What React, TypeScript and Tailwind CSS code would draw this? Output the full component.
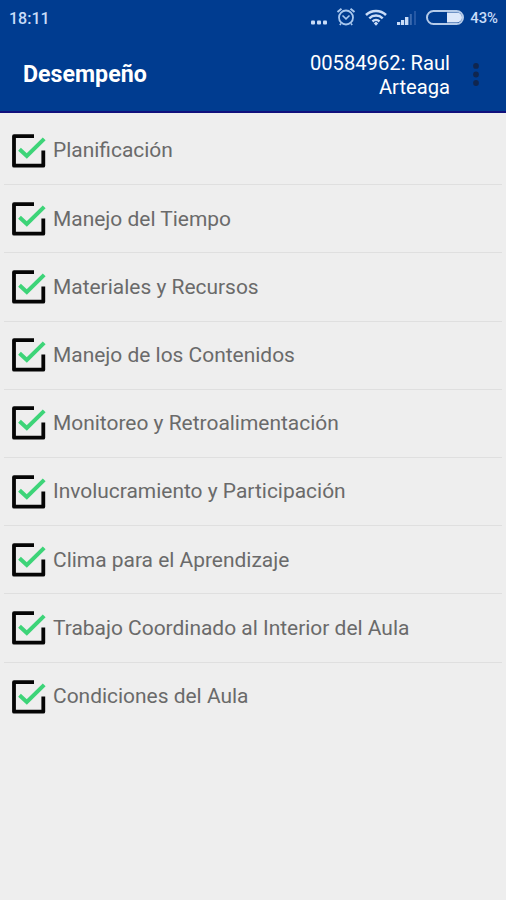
import React from "react";

const ITEMS = [
	"Planificación",
	"Manejo del Tiempo",
	"Materiales y Recursos",
	"Manejo de los Contenidos",
	"Monitoreo y Retroalimentación",
	"Involucramiento y Participación",
	"Clima para el Aprendizaje",
	"Trabajo Coordinado al Interior del Aula",
	"Condiciones del Aula",
];

function CheckedBox() {
	return (
		<svg width="36" height="36" viewBox="0 0 36 36" fill="none" className="shrink-0">
			<path
				d="M23 3.2H3V32.7H32.3V17.5"
				stroke="#050505"
				strokeWidth="3.8"
				strokeLinejoin="round"
			/>
			<path d="M8.5 16.2L15.8 23L33.2 5.8" stroke="#3dd478" strokeWidth="4" />
		</svg>
	);
}

function DotsIcon() {
	return (
		<svg width="18" height="16" viewBox="0 0 18 16" fill="#c9dcf8">
			<rect x="1" y="10.5" width="4" height="4" rx="1" />
			<rect x="7" y="10.5" width="4" height="4" rx="1" />
			<rect x="13" y="10.5" width="4" height="4" rx="1" />
		</svg>
	);
}

function AlarmIcon() {
	return (
		<svg width="20" height="20" viewBox="0 0 20 20" fill="none" stroke="#a9c8ee">
			<circle cx="10" cy="10.5" r="7" strokeWidth="1.8" />
			<path d="M1.5 5L5.5 1.8M18.5 5L14.5 1.8" strokeWidth="2" />
			<path d="M6.5 8.5L10 11.8L13.5 8.5" strokeWidth="1.6" />
			<path d="M5 16.5L3.8 18M15 16.5L16.2 18" strokeWidth="1.6" />
		</svg>
	);
}

function WifiIcon() {
	return (
		<svg width="22" height="17" viewBox="0 0 22 17" fill="none" stroke="#c9dcf8" strokeWidth="2.5">
			<path d="M1 6C6.5 0.5 15.5 0.5 21 6" />
			<path d="M4.3 9.3C8 5.7 14 5.7 17.7 9.3" />
			<path d="M7.5 12.5C9.5 10.5 12.5 10.5 14.5 12.5" />
			<path d="M11 12.6L13.2 14.6L11 16.8L8.8 14.6Z" fill="#c9dcf8" stroke="none" />
		</svg>
	);
}

function SignalIcon() {
	return (
		<svg width="20" height="14" viewBox="0 0 20 14" fill="#c9dcf8">
			<rect x="0" y="11" width="3.2" height="3" />
			<rect x="4" y="9" width="3.2" height="5" />
			<rect x="8" y="6" width="3.4" height="8" />
			<rect x="12.8" y="3" width="2" height="11" fill="#3c6bb0" />
			<rect x="17" y="0" width="2" height="14" fill="#2457a4" />
		</svg>
	);
}

function BatteryIcon() {
	return (
		<svg width="38" height="15" viewBox="0 0 38 15" fill="none">
			<rect x="1" y="1" width="36" height="13" rx="6.5" stroke="#b5cbe9" strokeWidth="2" />
			<path d="M21 2.5H31A5 5 0 0 1 31 12.5H21Z" fill="#dde8fa" />
		</svg>
	);
}

function StatusBar() {
	return (
		<div className="flex h-9 items-center pr-2 pl-[9px] text-[#c9dcf8]">
			<span className="pt-0.5 text-[16px] font-medium">18:11</span>
			<div className="ml-auto flex items-center">
				<DotsIcon />
				<div className="-mt-0.5 ml-2">
					<AlarmIcon />
				</div>
				<div className="-mt-0.5 ml-[9px]">
					<WifiIcon />
				</div>
				<div className="ml-[10px]">
					<SignalIcon />
				</div>
				<div className="-mt-0.5 ml-[9px]">
					<BatteryIcon />
				</div>
				<span className="ml-[6px] text-[14.8px] font-medium">43%</span>
			</div>
		</div>
	);
}

export default function App() {
	return (
		<div className="flex h-[900px] w-[506px] flex-col overflow-hidden bg-[#eeeeee] font-['Roboto',sans-serif]">
			<header className="h-[113px] shrink-0 border-b-2 border-[#10107c] bg-[#003c90]">
				<StatusBar />
				<div className="flex h-[77px] items-center pr-[26px] pl-[23px] text-white">
					<h1 className="text-[23.2px] font-bold">Desempeño</h1>
					<p className="ml-auto w-[160px] text-right text-[20.2px] leading-6">
						00584962: Raul Arteaga
					</p>
					<svg width="8" height="24" viewBox="0 0 8 24" fill="#10264f" className="ml-[22px]">
						<circle cx="4" cy="2.9" r="2.9" />
						<circle cx="4" cy="11.5" r="2.9" />
						<circle cx="4" cy="20" r="2.9" />
					</svg>
				</div>
			</header>
			<ul className="mx-1 mt-1 divide-y divide-[#dfdfdf]">
				{ITEMS.map((item) => (
					<li key={item} className="flex h-[68.2px] items-center pl-[7px]">
						<CheckedBox />
						<span className="ml-[6px] pt-px text-[20.95px] whitespace-nowrap text-[#6a6a6a]">
							{item}
						</span>
					</li>
				))}
			</ul>
		</div>
	);
}
